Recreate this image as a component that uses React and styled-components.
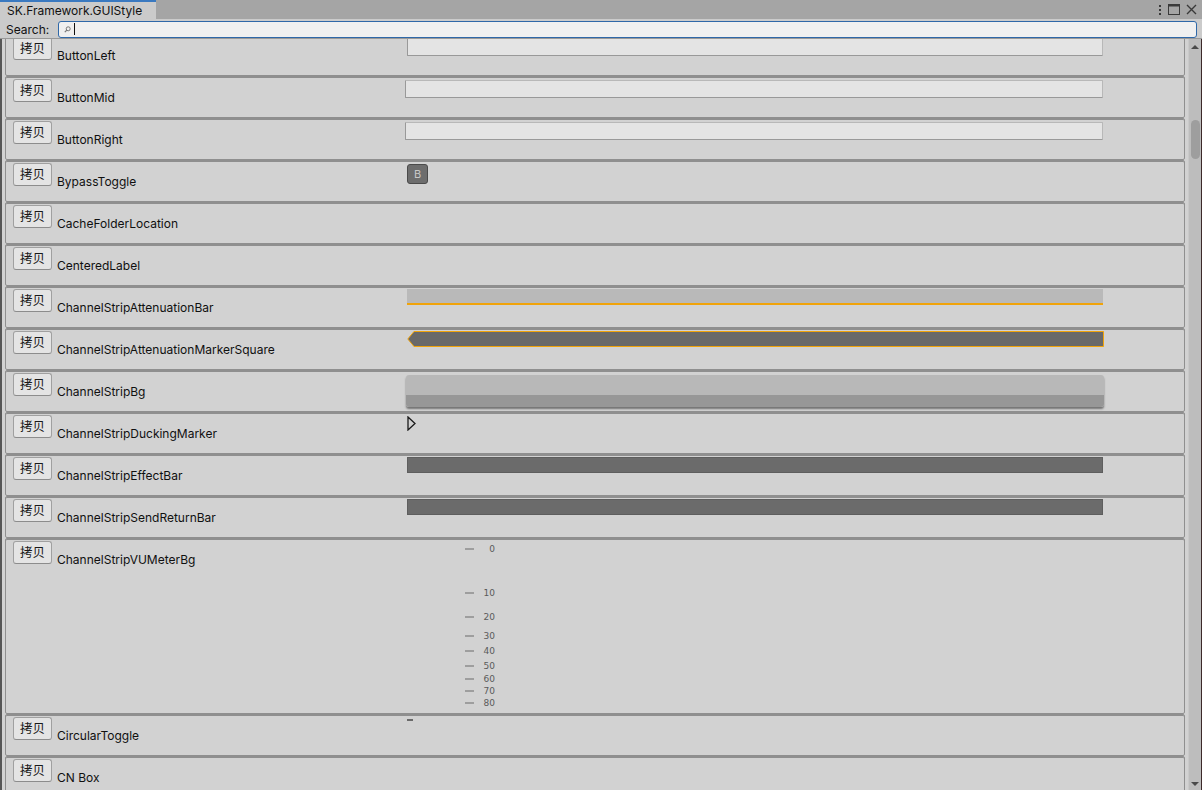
import styled, { createGlobalStyle } from 'styled-components'

const GlobalStyle = createGlobalStyle`
  html, body {
    margin: 0;
    padding: 0;
    background: #d2d2d2;
    overflow: hidden;
  }
  body {
    font-family: Inter, "Noto Sans CJK SC", sans-serif;
    font-size: 12px;
    color: #101010;
  }
`

const Window = styled.div`
  width: 1202px;
  height: 790px;
  display: flex;
  flex-direction: column;
  overflow: hidden;
  background: #d2d2d2;
`

const TabBar = styled.div`
  height: 19px;
  flex: 0 0 19px;
  background: #a5a5a5;
  display: flex;
  align-items: stretch;
`

const Tab = styled.div`
  width: 156px;
  box-sizing: border-box;
  background: #cbcbcb;
  border-top: 2px solid #3a79c0;
  padding-left: 7px;
  line-height: 17px;
  font-size: 12px;
  color: #111;
`

const WindowIcons = styled.div`
  margin-left: auto;
  display: flex;
  align-items: center;
  gap: 6px;
  padding-right: 5px;
  color: #3a3a3a;
`

const SearchRow = styled.div`
  height: 20px;
  flex: 0 0 20px;
  background: #cbcbcb;
  border-bottom: 1px solid #999;
  box-sizing: border-box;
  display: flex;
  align-items: center;
  padding: 1px 5px 0 6px;
  gap: 9px;
`

const SearchLabel = styled.span`
  font-size: 12px;
  color: #111;
`

const SearchField = styled.div`
  flex: 1;
  height: 17px;
  box-sizing: border-box;
  border: 1px solid #2f68a8;
  border-radius: 3px;
  background: #f0f0f0;
  display: flex;
  align-items: center;
  padding-left: 5px;
  gap: 3px;
`

const Caret = styled.span`
  width: 1px;
  height: 12px;
  background: #111;
`

const Body = styled.div`
  flex: 1;
  display: flex;
  min-height: 0;
  border-left: 2px solid #565656;
`

const Viewport = styled.div`
  flex: 1;
  overflow: hidden;
`

const List = styled.div`
  margin-top: -5px;
  padding: 0 3px 0 3px;
  display: flex;
  flex-direction: column;
`

const Row = styled.div`
  height: ${p => p.$h || 42}px;
  flex: 0 0 ${p => p.$h || 42}px;
  box-sizing: border-box;
  border: 1px solid #8f8f8f;
  border-radius: 2px;
  background: #d2d2d2;
  display: flex;
  align-items: flex-start;
  padding: 2px 0 0 7px;
  box-shadow: inset 0 1px 0 #8f8f8f;
`

const CopyButton = styled.button`
  width: 39px;
  height: 23px;
  flex: 0 0 39px;
  box-sizing: border-box;
  margin: 0;
  padding: 0 0 3px;
  border: 1px solid #a0a0a0;
  border-bottom-color: #8c8c8c;
  border-radius: 3px;
  background: #e4e4e4;
  font-family: "Noto Sans CJK SC", sans-serif;
  font-size: 12.5px;
  color: #1a1a1a;
`

const Label = styled.div`
  width: 348px;
  flex: 0 0 348px;
  margin-left: 5px;
  margin-top: 11px;
  line-height: 16px;
  font-size: 12px;
  color: #101010;
`

const Preview = styled.div`
  width: 700px;
  margin-top: ${p => p.$top || 0}px;
  padding-left: ${p => p.$left || 0}px;
  box-sizing: border-box;
`

const FieldBox = styled.div`
  height: 18px;
  box-sizing: border-box;
  width: ${p => p.$w}px;
  background: #e4e4e4;
  border: 1px solid #b8b8b8;
  border-left-color: #999;
  border-bottom-color: #999;
  border-radius: 1px;
`

const ToggleB = styled.div`
  width: 21px;
  height: 20px;
  box-sizing: border-box;
  margin-left: 2px;
  background: #6d6d6d;
  border: 1px solid #4a4a4a;
  border-radius: 3px;
  color: #c8c8c8;
  font-size: 11px;
  display: flex;
  align-items: center;
  justify-content: center;
`

const AttBar = styled.div`
  margin-left: 2px;
  width: 696px;
  height: 16px;
  box-sizing: border-box;
  background: #b9b9b9;
  border-bottom: 2px solid #f0a30a;
`

const StripBg = styled.div`
  margin-left: 1px;
  width: 698px;
  height: 32px;
  border-radius: 3px;
  background: linear-gradient(#b8b8b8 0, #b8b8b8 20px, #979797 20px);
  box-shadow: 0 2px 2px rgba(0, 0, 0, 0.45);
`

const DarkBar = styled.div`
  margin-left: 2px;
  width: 696px;
  height: 16px;
  background: #6b6b6b;
  border: 1px solid #5e5e5e;
  box-sizing: border-box;
`

const Meter = styled.div`
  position: relative;
  height: 170px;
`

const Tick = styled.div`
  position: absolute;
  left: 60px;
  width: 30px;
  display: flex;
  align-items: center;
  justify-content: space-between;
  transform: translateY(-50%);
  font-family: "DejaVu Sans", sans-serif;
  font-size: 9px;
  color: #5a5a5a;
  line-height: 11px;
`

const TickLine = styled.span`
  width: 9px;
  height: 1px;
  background: #6a6a6a;
`

const Dash = styled.div`
  margin-left: 2px;
  width: 6px;
  height: 2px;
  background: #6a6a6a;
`

const Scrollbar = styled.div`
  width: 14px;
  flex: 0 0 14px;
  background: #bdbdbd;
  border-left: 1px solid #c9c9c9;
  border-right: 1px solid #3c2a2a;
  box-sizing: border-box;
  display: flex;
  flex-direction: column;
  align-items: center;
  padding: 6px 0 4px;
`

const Thumb = styled.div`
  width: 9px;
  height: 39px;
  margin-top: 71px;
  border-radius: 5px;
  background: #9e9e9e;
`

const Arrow = styled.div`
  width: 0;
  height: 0;
  border-left: 4px solid transparent;
  border-right: 4px solid transparent;
  ${p => p.$down ? 'border-top: 4px solid #4a4a4a;' : 'border-bottom: 4px solid #4a4a4a;'}
  ${p => p.$down ? 'margin-top: auto;' : ''}
`

const vuTicks = [
  [0, 10], [10, 54], [20, 78], [30, 97], [40, 112],
  [50, 127], [60, 140], [70, 152], [80, 164],
]

const rows = [
  { name: 'ButtonLeft', top: 1, left: 2, view: <FieldBox $w={696} /> },
  { name: 'ButtonMid', top: 1, view: <FieldBox $w={698} /> },
  { name: 'ButtonRight', top: 1, view: <FieldBox $w={698} /> },
  { name: 'BypassToggle', top: 1, view: <ToggleB>B</ToggleB> },
  { name: 'CacheFolderLocation' },
  { name: 'CenteredLabel' },
  { name: 'ChannelStripAttenuationBar', top: 0, view: <AttBar /> },
  {
    name: 'ChannelStripAttenuationMarkerSquare', top: 0, left: 2,
    view: (
      <svg width="697" height="16" viewBox="0 0 697 16">
        <polygon points="7,0.5 696.5,0.5 696.5,15.5 7,15.5 0.8,8" fill="#696969" stroke="#f0a30a" />
      </svg>
    ),
  },
  { name: 'ChannelStripBg', top: 2, view: <StripBg /> },
  {
    name: 'ChannelStripDuckingMarker', top: 1, left: 2,
    view: (
      <svg width="9" height="15" viewBox="0 0 9 15">
        <polygon points="1,1 8,7.5 1,14" fill="none" stroke="#1a1a1a" strokeWidth="1.3" />
      </svg>
    ),
  },
  { name: 'ChannelStripEffectBar', top: 0, view: <DarkBar /> },
  { name: 'ChannelStripSendReturnBar', top: 0, view: <DarkBar /> },
  {
    name: 'ChannelStripVUMeterBg', h: 176, top: -2,
    view: (
      <Meter>
        {vuTicks.map(([n, y]) => (
          <Tick key={n} style={{ top: y }}>
            <TickLine />
            <span>{n}</span>
          </Tick>
        ))}
      </Meter>
    ),
  },
  { name: 'CircularToggle', top: 2, view: <Dash /> },
  { name: 'CN Box' },
]

function App() {
  return (
    <>
      <GlobalStyle />
      <Window>
        <TabBar>
          <Tab>SK.Framework.GUIStyle</Tab>
          <WindowIcons>
            <svg width="4" height="12" viewBox="0 0 4 12">
              <rect x="1" y="1" width="2" height="2" fill="#3a3a3a" />
              <rect x="1" y="5" width="2" height="2" fill="#3a3a3a" />
              <rect x="1" y="9" width="2" height="2" fill="#3a3a3a" />
            </svg>
            <svg width="12" height="11" viewBox="0 0 12 11">
              <rect x="0.5" y="0.5" width="11" height="10" fill="none" stroke="#3a3a3a" />
              <rect x="0.5" y="0.5" width="11" height="2" fill="#3a3a3a" />
            </svg>
            <svg width="11" height="11" viewBox="0 0 11 11">
              <path d="M1 1 L10 10 M10 1 L1 10" stroke="#3a3a3a" strokeWidth="1.4" />
            </svg>
          </WindowIcons>
        </TabBar>
        <SearchRow>
          <SearchLabel>Search:</SearchLabel>
          <SearchField>
            <svg width="7" height="7" viewBox="0 0 7 7">
              <circle cx="4.2" cy="2.8" r="2" fill="none" stroke="#777" strokeWidth="1" />
              <path d="M2.8 4.2 L0.8 6.2" stroke="#777" strokeWidth="1.2" />
            </svg>
            <Caret />
          </SearchField>
        </SearchRow>
        <Body>
          <Viewport>
            <List>
              {rows.map(r => (
                <Row key={r.name} $h={r.h}>
                  <CopyButton>拷贝</CopyButton>
                  <Label>{r.name}</Label>
                  <Preview $top={r.top} $left={r.left}>{r.view}</Preview>
                </Row>
              ))}
            </List>
          </Viewport>
          <Scrollbar>
            <Arrow />
            <Thumb />
            <Arrow $down />
          </Scrollbar>
        </Body>
      </Window>
    </>
  )
}

export default App
